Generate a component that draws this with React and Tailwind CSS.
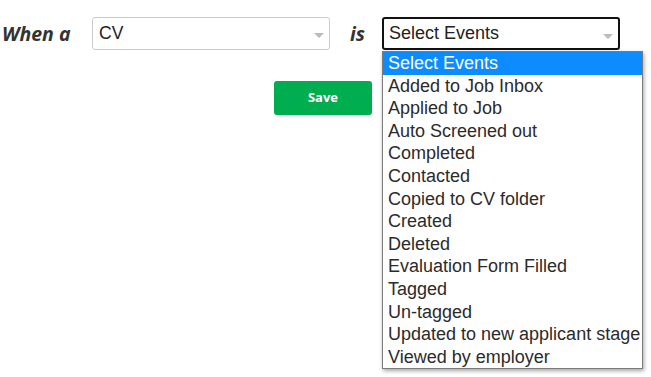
import React from 'react';

const events = [
    'Select Events',
    'Added to Job Inbox',
    'Applied to Job',
    'Auto Screened out',
    'Completed',
    'Contacted',
    'Copied to CV folder',
    'Created',
    'Deleted',
    'Evaluation Form Filled',
    'Tagged',
    'Un-tagged',
    'Updated to new applicant stage',
    'Viewed by employer',
];

const Arrow = () => (
    <span className="absolute right-[5px] top-[15px] w-0 h-0 border-l-[5px] border-r-[5px] border-t-[5px] border-l-transparent border-r-transparent border-t-[#bbbbbb]" />
);

const App = () => {
    return (
        <div className="w-[651px] h-[377px] bg-white relative overflow-hidden font-['Liberation_Sans',Arial,sans-serif] text-[#333]">
            <div className="flex items-center pt-[17px]">
                <span className="ml-[2px] w-[90px] font-['Open_Sans',sans-serif] font-bold italic text-[19.5px] text-[#333] leading-[33px]">
                    When a
                </span>
                <div className="relative w-[238px] h-[33px] border border-[#cccccc] rounded-[3px] pl-[6px] flex items-center text-[17.5px] text-[#222]">
                    CV
                    <Arrow />
                </div>
                <span className="ml-[20px] w-[32px] font-['Open_Sans',sans-serif] font-bold italic text-[19.5px] text-[#333] leading-[33px]">
                    is
                </span>
                <div className="relative">
                    <div className="relative w-[238px] h-[33px] border-2 border-[#111] rounded-[3px] pl-[5px] flex items-center text-[18px] text-[#222]">
                        Select Events
                        <Arrow />
                    </div>
                    <ul className="absolute left-0 top-[34px] w-[261px] bg-white border border-[#7a7a7a] shadow-[1px_2px_4px_rgba(0,0,0,0.35)] py-0">
                        {events.map((ev, i) => (
                            <li
                                key={ev}
                                className={
                                    i === 0
                                        ? 'h-[22.6px] leading-[22px] pl-[5px] text-[18px] whitespace-nowrap bg-[#0d8cff] text-white'
                                        : 'h-[22.6px] leading-[22px] pl-[5px] text-[18px] whitespace-nowrap text-[#2b2b2b]'
                                }
                            >
                                {ev}
                            </li>
                        ))}
                    </ul>
                </div>
            </div>
            <div className="mt-[31px] ml-[274px]">
                <button className="w-[98px] h-[34px] bg-[#00ad4f] rounded-[3px] text-white font-['Open_Sans',sans-serif] font-bold text-[13px]">
                    Save
                </button>
            </div>
        </div>
    );
};

export default App;
